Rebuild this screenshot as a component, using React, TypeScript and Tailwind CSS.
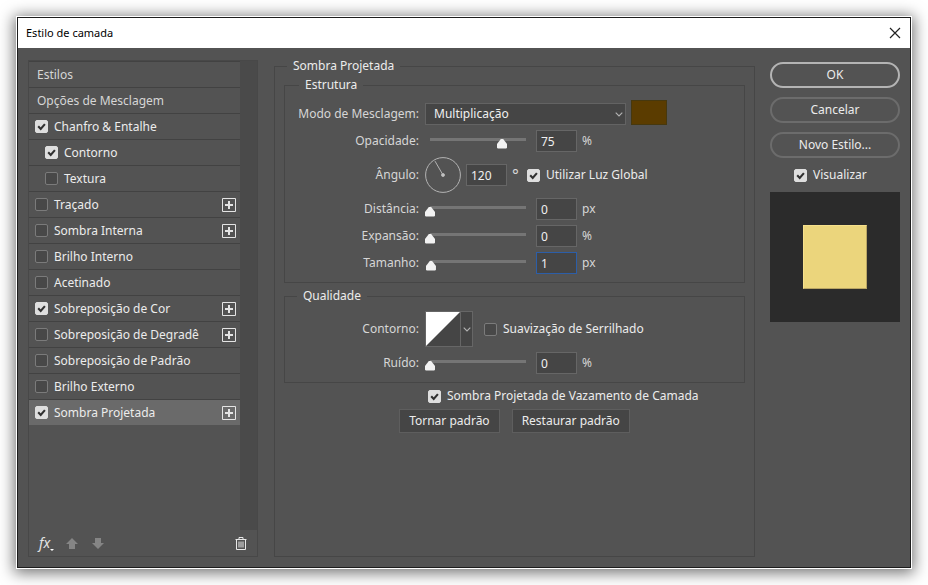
import { useState } from "react";

type Effect = {
  id: string;
  name: string;
  checked?: boolean;
  nested?: boolean;
  stackable?: boolean;
};

const effects: Effect[] = [
  { id: "bevel", name: "Chanfro & Entalhe", checked: true },
  { id: "bevel-contour", name: "Contorno", checked: true, nested: true },
  { id: "bevel-texture", name: "Textura", nested: true },
  { id: "stroke", name: "Traçado", stackable: true },
  { id: "inner-shadow", name: "Sombra Interna", stackable: true },
  { id: "inner-glow", name: "Brilho Interno" },
  { id: "satin", name: "Acetinado" },
  { id: "color-overlay", name: "Sobreposição de Cor", checked: true, stackable: true },
  { id: "gradient-overlay", name: "Sobreposição de Degradê", stackable: true },
  { id: "pattern-overlay", name: "Sobreposição de Padrão" },
  { id: "outer-glow", name: "Brilho Externo" },
  { id: "drop-shadow", name: "Sombra Projetada", checked: true, stackable: true },
];

function Checkbox({ id, label, defaultChecked }: { id: string; label: string; defaultChecked?: boolean }) {
  return (
    <div className="flex items-center gap-1.5">
      <span className="relative size-[13px] shrink-0">
        <input
          id={id}
          type="checkbox"
          defaultChecked={defaultChecked}
          className="peer block size-[13px] appearance-none rounded-xs border border-[#7b7b7b] bg-[#484848] checked:border-[#dedede] checked:bg-[#dedede]"
        />
        <svg viewBox="0 0 13 13" className="pointer-events-none absolute inset-0 hidden size-[13px] peer-checked:block">
          <path d="M3.2 6.3 5.7 8.9 9.9 4.1" fill="none" stroke="#303030" strokeWidth="2.1" />
        </svg>
      </span>
      <label htmlFor={id} className="whitespace-nowrap">{label}</label>
    </div>
  );
}

function PlusButton({ name }: { name: string }) {
  return (
    <button type="button" aria-label={`Adicionar ${name}`} className="ml-auto size-3.5">
      <svg viewBox="0 0 14 14" className="block size-3.5" fill="none" stroke="#e4e4e4">
        <path d="M.5.5h13v13H.5z" />
        <path d="M7 3v8M3 7h8" strokeWidth="2" />
      </svg>
    </button>
  );
}

function Chevron() {
  return (
    <svg viewBox="0 0 8 5" className="h-[5px] w-2" fill="none" stroke="#b4b4b4" strokeWidth="1.1">
      <path d="M.7.7 4 4 7.3.7" />
    </svg>
  );
}

function NumberBox({ id, value, onChange, label }: { id: string; value: number; onChange: (v: number) => void; label: string }) {
  return (
    <input
      id={id}
      type="text"
      inputMode="numeric"
      aria-label={label}
      value={value}
      onChange={(e) => onChange(Number(e.target.value) || 0)}
      className={`h-[22px] w-[41px] border bg-[#454545] pl-1 text-[#f0f0f0] outline-none ${
        id === "size" ? "border-[#2c5ea8]" : "border-[#666666]"
      }`}
    />
  );
}

function SliderRow({ id, label, initial, max, unit }: { id: string; label: string; initial: number; max: number; unit: string }) {
  const [value, setValue] = useState(initial);
  return (
    <div className="flex h-[22px] items-center gap-[5px]">
      <label htmlFor={`${id}-range`} className="w-[135px] pr-px text-right text-[#d6d6d6]">{label}</label>
      <input
        id={`${id}-range`}
        type="range"
        min={0}
        max={max}
        value={value}
        onChange={(e) => setValue(Number(e.target.value))}
        className="h-[18px] w-[106px] appearance-none self-start bg-transparent [&::-webkit-slider-runnable-track]:h-[3px] [&::-webkit-slider-runnable-track]:bg-[linear-gradient(#757575,#757575)] [&::-webkit-slider-runnable-track]:bg-[length:96px_3px] [&::-webkit-slider-runnable-track]:bg-center [&::-webkit-slider-runnable-track]:bg-no-repeat [&::-webkit-slider-thumb]:mt-[1px] [&::-webkit-slider-thumb]:h-[10px] [&::-webkit-slider-thumb]:w-[10px] [&::-webkit-slider-thumb]:appearance-none [&::-webkit-slider-thumb]:bg-[#f2f2f2] [&::-webkit-slider-thumb]:[clip-path:polygon(42%_0,58%_0,100%_55%,100%_92%,92%_100%,8%_100%,0_92%,0_55%)]"
      />
      <NumberBox id={id} label={label} value={value} onChange={setValue} />
      <span className="text-[#d6d6d6]">{unit}</span>
    </div>
  );
}

function EffectList() {
  return (
    <aside className="flex w-[230px] shrink-0 flex-col border border-[#484848]">
      <div className="flex flex-1">
        <ul className="flex-1">
          {["Estilos", "Opções de Mesclagem"].map((name) => (
            <li key={name} className="flex h-[26px] items-center border-t border-[#424242] pl-2 text-[#d6d6d6]">
              {name}
            </li>
          ))}
          {effects.map((fx) => (
            <li
              key={fx.id}
              className={`flex h-[26px] items-center border-t border-[#424242] pr-1 ${fx.nested ? "pl-4" : "pl-1.5"} ${
                fx.id === "drop-shadow" ? "bg-[#6a6a6a]" : ""
              }`}
            >
              <Checkbox id={fx.id} label={fx.name} defaultChecked={fx.checked} />
              {fx.stackable && <PlusButton name={fx.name} />}
            </li>
          ))}
        </ul>
        <div className="w-[17px] bg-[#4a4a4a]" />
      </div>
      <div className="flex h-[26px] items-center gap-3 px-2.5">
        <button type="button" aria-label="Efeitos" className="flex items-end text-sm leading-4 text-[#e4e4e4] italic">
          fx
          <svg viewBox="0 0 4 2" className="h-0.5 w-1"><path d="M0 0h4L2 2z" fill="#ffffff" /></svg>
        </button>
        <button type="button" aria-label="Mover para cima">
          <svg viewBox="0 0 12 11" className="h-[11px] w-3"><path d="M6 0 12 6H9v5H3V6H0z" fill="#858585" /></svg>
        </button>
        <button type="button" aria-label="Mover para baixo" className="ml-0.5">
          <svg viewBox="0 0 12 11" className="h-[11px] w-3"><path d="M6 11 12 5H9V0H3v5H0z" fill="#858585" /></svg>
        </button>
        <button type="button" aria-label="Excluir" className="ml-auto">
          <svg viewBox="0 0 12 13" className="h-[13px] w-3" fill="none" stroke="#e8e8e8">
            <path d="M.5 2.5h11M4 2V.5h4V2M1.5 3v9.5h9V3M4 4.5v6M6 4.5v6M8 4.5v6" />
          </svg>
        </button>
      </div>
    </aside>
  );
}

function Structure() {
  const [angle, setAngle] = useState(120);
  const rad = (angle * Math.PI) / 180;
  return (
    <fieldset className="border border-[#464646] pb-2">
      <legend className="ml-3.5 px-1.5 leading-4">Estrutura</legend>
      <div className="flex flex-col gap-[5px] pt-[7px]">
        <div className="flex h-[25px] items-end gap-[5px]">
          <label htmlFor="blend" className="w-[135px] pr-px text-right leading-[22px] whitespace-nowrap text-[#d6d6d6]">Modo de Mesclagem:</label>
          <div className="relative w-[201px]">
            <select id="blend" className="block h-[22px] w-full appearance-none border border-[#636363] bg-[#454545] pl-2 text-[#f0f0f0]">
              <option>Multiplicação</option>
              <option>Normal</option>
              <option>Divisão</option>
            </select>
            <span className="pointer-events-none absolute inset-y-0 right-[3px] flex items-center"><Chevron /></span>
          </div>
          <button type="button" aria-label="Cor da sombra" className="h-[25px] w-9 border border-[#46380f] bg-[#5b3c00]" />
        </div>
        <SliderRow id="opacity" label="Opacidade:" initial={75} max={100} unit="%" />
        <div className="flex h-9 items-center gap-[5px]">
          <label htmlFor="angle" className="w-[135px] pr-px text-right text-[#d6d6d6]">Ângulo:</label>
          <svg viewBox="0 0 36 36" className="size-9" fill="none" stroke="#b4b4b4">
            <circle cx="18" cy="18" r="17.4" />
            <path d={`M18 18 ${18 + 16 * Math.cos(rad)} ${18 - 16 * Math.sin(rad)}`} />
            <circle cx="18" cy="18" r="1.5" fill="#c8c8c8" />
          </svg>
          <NumberBox id="angle" label="Ângulo" value={angle} onChange={setAngle} />
          <span className="w-2.5 text-base text-[#d6d6d6]">°</span>
          <Checkbox id="global-light" label="Utilizar Luz Global" defaultChecked />
        </div>
        <SliderRow id="distance" label="Distância:" initial={0} max={250} unit="px" />
        <SliderRow id="spread" label="Expansão:" initial={0} max={100} unit="%" />
        <SliderRow id="size" label="Tamanho:" initial={1} max={100} unit="px" />
      </div>
    </fieldset>
  );
}

function Quality() {
  return (
    <fieldset className="border border-[#464646] pb-2">
      <legend className="ml-3 px-1.5 leading-4">Qualidade</legend>
      <div className="flex flex-col gap-[5px] pt-[7px]">
        <div className="flex h-9 items-center gap-[5px]">
          <span className="w-[135px] pr-px text-right text-[#d6d6d6]">Contorno:</span>
          <div className="flex h-9 w-12 border border-[#666666]">
            <button type="button" aria-label="Editar contorno" className="flex-1">
              <svg viewBox="0 0 34 34" className="block size-[34px]">
                <path d="M0 0h34v34H0z" fill="#454545" />
                <path d="M0 0h34L0 34z" fill="#ffffff" />
              </svg>
            </button>
            <button type="button" aria-label="Escolher contorno" className="flex w-3 items-center justify-center border-l border-[#666666] bg-[#454545]">
              <Chevron />
            </button>
          </div>
          <div className="pl-1.5">
            <Checkbox id="anti-alias" label="Suavização de Serrilhado" />
          </div>
        </div>
        <SliderRow id="noise" label="Ruído:" initial={0} max={100} unit="%" />
      </div>
    </fieldset>
  );
}

const defaultButton = "h-6 border border-[#5e5e5e] bg-[#454545] px-[9px] whitespace-nowrap";
const pillButton = "h-[26px] rounded-full border-2 border-[#6c6c6c]";

export default function App() {
  return (
    <div className="flex min-h-screen flex-col bg-white px-[17px] pt-[17px] pb-[17px] font-['Noto_Sans','Open_Sans',sans-serif] text-xs text-[#ececec]">
      <div className="flex flex-1 flex-col border border-[#1c1c1c] bg-[#535353] shadow-[0_0_0_1px_#ffffff,0_2px_14px_3px_rgba(0,0,0,0.55)]">
        <header className="flex h-[30px] items-center justify-between bg-white px-2 text-black">
          <h1 className="text-[11px]">Estilo de camada</h1>
          <button type="button" aria-label="Fechar">
            <svg viewBox="0 0 14 14" className="size-3.5" fill="none" stroke="#222222" strokeWidth="1.2">
              <path d="m2 2 10 10M12 2 2 12" />
            </svg>
          </button>
        </header>
        <div className="flex flex-1 p-[10px]">
          <div className="flex pt-0.5">
            <EffectList />
          </div>
          <fieldset className="mr-[15px] ml-4 flex-1 border border-[#464646]">
            <legend className="ml-3 px-1.5 leading-4">Sombra Projetada</legend>
            <div className="flex flex-col gap-[5px] px-[9px] pt-[3px]">
              <Structure />
              <Quality />
              <div className="pl-36 leading-4">
                <Checkbox id="knockout" label="Sombra Projetada de Vazamento de Camada" defaultChecked />
              </div>
              <div className="flex justify-center gap-3">
                <button type="button" className={defaultButton}>Tornar padrão</button>
                <button type="button" className={defaultButton}>Restaurar padrão</button>
              </div>
            </div>
          </fieldset>
          <div className="flex w-[130px] shrink-0 flex-col gap-[9px] pt-1">
            <button type="button" className="h-[26px] rounded-full border-2 border-[#b4b4b4]">OK</button>
            <button type="button" className={pillButton}>Cancelar</button>
            <button type="button" className={pillButton}>Novo Estilo...</button>
            <div className="flex pl-6 leading-4">
              <Checkbox id="preview" label="Visualizar" defaultChecked />
            </div>
            <div className="flex h-[130px] items-center justify-center bg-[#2b2b2b]">
              <div className="size-16 border border-t-[#f6e08c] border-r-[#b9a564] border-b-[#b9a564] border-l-[#f6e08c] bg-[#ebd57c]" />
            </div>
          </div>
        </div>
      </div>
    </div>
  );
}
